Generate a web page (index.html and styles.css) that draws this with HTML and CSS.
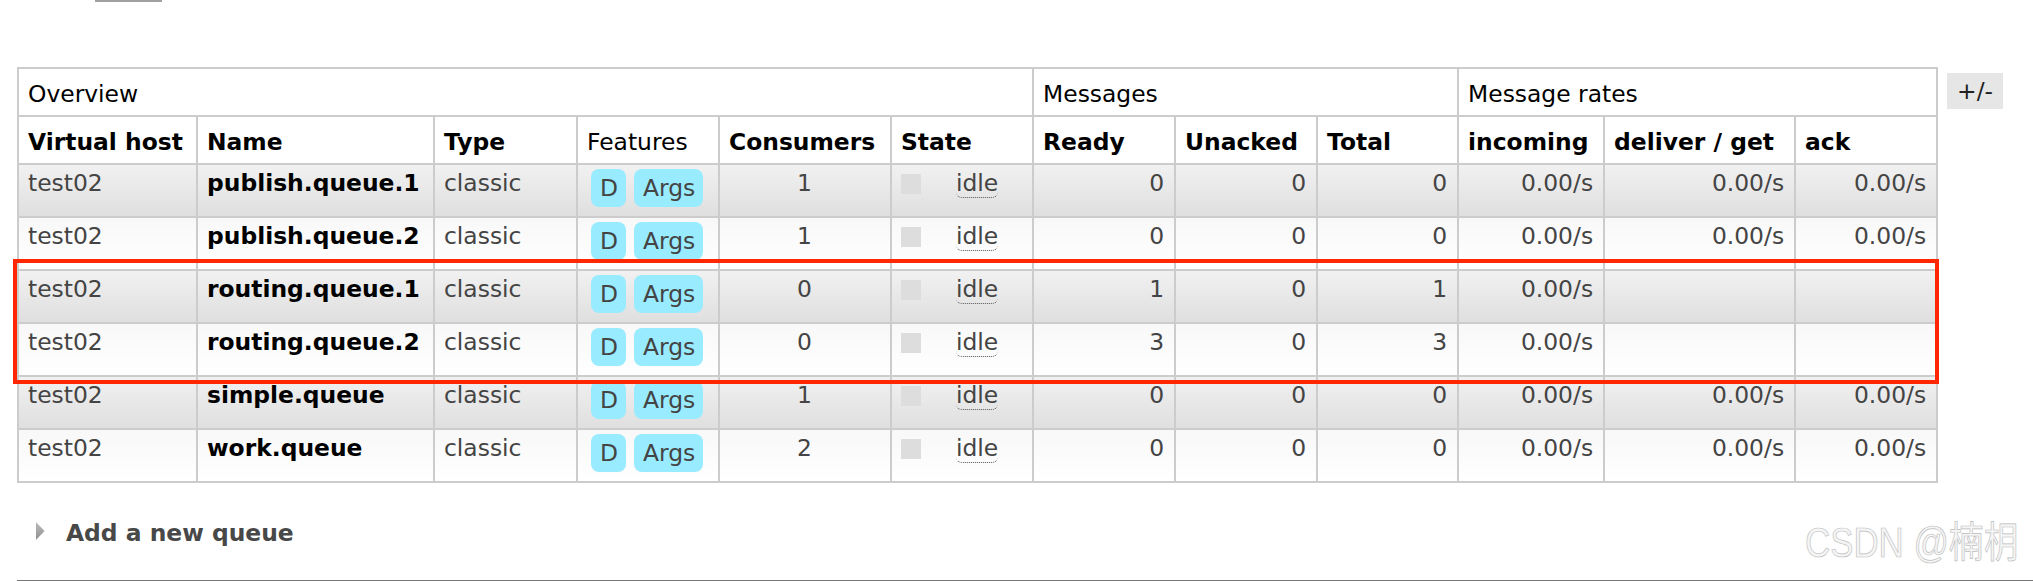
FILE: index.html
```html
<!DOCTYPE html>
<html lang="en">
<head>
<meta charset="utf-8">
<title>Queues</title>
<link rel="stylesheet" href="styles.css">
</head>
<body>
<div class="page">
  <div class="topbar"></div>
  <div class="list-wrap">
    <table class="list">
      <colgroup>
        <col class="c-vh"><col class="c-name"><col class="c-type"><col class="c-feat"><col class="c-cons"><col class="c-state">
        <col class="c-ready"><col class="c-unack"><col class="c-total">
        <col class="c-in"><col class="c-deliver"><col class="c-ack">
      </colgroup>
      <thead>
        <tr class="group">
          <th colspan="6">Overview</th>
          <th colspan="3">Messages</th>
          <th colspan="3">Message rates</th>
        </tr>
        <tr class="cols">
          <th>Virtual host</th><th>Name</th><th>Type</th><th class="plain">Features</th><th>Consumers</th><th>State</th>
          <th>Ready</th><th>Unacked</th><th>Total</th>
          <th>incoming</th><th>deliver / get</th><th>ack</th>
        </tr>
      </thead>
      <tbody>
        <tr class="alt1">
          <td>test02</td><td class="name">publish.queue.1</td><td>classic</td>
          <td><div class="tags"><span class="tag">D</span><span class="tag">Args</span></div></td>
          <td class="center">1</td>
          <td><span class="state-box"></span><abbr class="state">idle</abbr></td>
          <td class="num">0</td><td class="num">0</td><td class="num">0</td>
          <td class="num">0.00/s</td><td class="num">0.00/s</td><td class="num">0.00/s</td>
        </tr>
        <tr class="alt2">
          <td>test02</td><td class="name">publish.queue.2</td><td>classic</td>
          <td><div class="tags"><span class="tag">D</span><span class="tag">Args</span></div></td>
          <td class="center">1</td>
          <td><span class="state-box"></span><abbr class="state">idle</abbr></td>
          <td class="num">0</td><td class="num">0</td><td class="num">0</td>
          <td class="num">0.00/s</td><td class="num">0.00/s</td><td class="num">0.00/s</td>
        </tr>
        <tr class="alt1">
          <td>test02</td><td class="name">routing.queue.1</td><td>classic</td>
          <td><div class="tags"><span class="tag">D</span><span class="tag">Args</span></div></td>
          <td class="center">0</td>
          <td><span class="state-box"></span><abbr class="state">idle</abbr></td>
          <td class="num">1</td><td class="num">0</td><td class="num">1</td>
          <td class="num">0.00/s</td><td class="num"></td><td class="num"></td>
        </tr>
        <tr class="alt2">
          <td>test02</td><td class="name">routing.queue.2</td><td>classic</td>
          <td><div class="tags"><span class="tag">D</span><span class="tag">Args</span></div></td>
          <td class="center">0</td>
          <td><span class="state-box"></span><abbr class="state">idle</abbr></td>
          <td class="num">3</td><td class="num">0</td><td class="num">3</td>
          <td class="num">0.00/s</td><td class="num"></td><td class="num"></td>
        </tr>
        <tr class="alt1">
          <td>test02</td><td class="name">simple.queue</td><td>classic</td>
          <td><div class="tags"><span class="tag">D</span><span class="tag">Args</span></div></td>
          <td class="center">1</td>
          <td><span class="state-box"></span><abbr class="state">idle</abbr></td>
          <td class="num">0</td><td class="num">0</td><td class="num">0</td>
          <td class="num">0.00/s</td><td class="num">0.00/s</td><td class="num">0.00/s</td>
        </tr>
        <tr class="alt2">
          <td>test02</td><td class="name">work.queue</td><td>classic</td>
          <td><div class="tags"><span class="tag">D</span><span class="tag">Args</span></div></td>
          <td class="center">2</td>
          <td><span class="state-box"></span><abbr class="state">idle</abbr></td>
          <td class="num">0</td><td class="num">0</td><td class="num">0</td>
          <td class="num">0.00/s</td><td class="num">0.00/s</td><td class="num">0.00/s</td>
        </tr>
      </tbody>
    </table>
    <button class="toggle" type="button">+/-</button>
  </div>
  <div class="section">
    <svg class="arrow" width="9" height="18" viewBox="0 0 9 18" aria-hidden="true">
      <defs>
        <linearGradient id="ag" x1="0" y1="0" x2="0" y2="1">
          <stop offset="0" stop-color="#bdbdbd"/>
          <stop offset="1" stop-color="#8f8f8f"/>
        </linearGradient>
      </defs>
      <polygon points="0,0 8.5,9 0,18" fill="url(#ag)"/>
    </svg>
    <h2 class="section-title">Add a new queue</h2>
  </div>
  <div class="rule"></div>
</div>
<div class="highlight"></div>
<div class="watermark">CSDN @楠枂</div>
</body>
</html>
```

FILE: styles.css
```css
html, body {
  margin: 0;
  padding: 0;
}
body {
  position: relative;
  height: 581px;
  overflow: hidden;
  background: #fff;
  color: #444;
  font-family: "DejaVu Sans", Verdana, sans-serif;
  font-size: 23.4px;
}
.page {
  padding-left: 17px;
}
.topbar {
  width: 67px;
  height: 2px;
  margin-left: 78px;
  background: #a0a0a0;
}
.list-wrap {
  display: flex;
  align-items: flex-start;
  margin-top: 65px;
}
table.list {
  border-collapse: collapse;
  table-layout: fixed;
  width: 1921px;
  flex: none;
}
.c-vh { width: 179px; }
.c-name { width: 237px; }
.c-type { width: 143px; }
.c-feat { width: 142px; }
.c-cons { width: 172px; }
.c-state { width: 142px; }
.c-ready { width: 142px; }
.c-unack { width: 142px; }
.c-total { width: 141px; }
.c-in { width: 146px; }
.c-deliver { width: 191px; }
.c-ack { width: 142px; }

.list th,
.list td {
  border: 2px solid #cccccc;
  padding: 4px 10px 0 9px;
  vertical-align: top;
  text-align: left;
  white-space: nowrap;
  overflow: hidden;
  line-height: normal;
}
.list thead th {
  padding-top: 11px;
  background: #fff;
  color: #000;
  font-weight: bold;
}
.list tr.group { height: 48px; }
.list tr.cols { height: 48px; }
.list tr.group th,
.list th.plain {
  font-weight: normal;
}
.list tbody tr { height: 53px; }
.list tr.alt1 td {
  background: linear-gradient(#f1f1f1, #dfdfdf);
}
.list tr.alt2 td {
  background: linear-gradient(#f8f8f8, #ffffff);
}
.list td.name {
  font-weight: bold;
  color: #000;
}
.list td.num { text-align: right; }
.list td.center { text-align: center; }

.tags {
  display: flex;
  gap: 8px;
  padding-left: 4px;
}
.tag {
  display: block;
  padding: 5px 8px 5px 9px;
  border-radius: 8px;
  background: #99ebff;
  color: #444;
}
.state-box {
  display: inline-block;
  vertical-align: top;
  width: 20px;
  height: 20px;
  margin-top: 5px;
  margin-right: 35px;
  background: #dddddd;
}
abbr.state {
  text-decoration: none;
  border-bottom: 1px dotted #555;
  border-radius: 0 0 6px 6px;
}
.toggle {
  flex: none;
  margin: 6px 0 0 9px;
  height: 36px;
  padding: 0 10px;
  border: none;
  background: #e6e6e6;
  color: #222;
  font-family: "DejaVu Sans", Verdana, sans-serif;
  font-size: 23.4px;
  line-height: 36px;
}
.section {
  display: flex;
  align-items: flex-start;
  margin-top: 36px;
  height: 28px;
}
.arrow {
  flex: none;
  margin: 3px 0 0 19px;
}
.section-title {
  margin: 0 0 0 21px;
  font-size: 23.4px;
  font-weight: bold;
  line-height: 28px;
  color: #484848;
}
.rule {
  margin-top: 33px;
  height: 1px;
  background: #777;
}
.highlight {
  position: absolute;
  left: 13px;
  top: 259px;
  width: 1926px;
  height: 125px;
  box-sizing: border-box;
  border: 4px solid #ff2600;
}
.watermark {
  position: absolute;
  left: 1805px;
  top: 519px;
  font-family: "Liberation Sans", "Noto Sans CJK SC", sans-serif;
  font-size: 42px;
  line-height: 48px;
  white-space: nowrap;
  color: #f5f5f5;
  -webkit-text-stroke: 0.7px #bdbdbd;
  transform: scaleX(0.83);
  transform-origin: left top;
}
```
